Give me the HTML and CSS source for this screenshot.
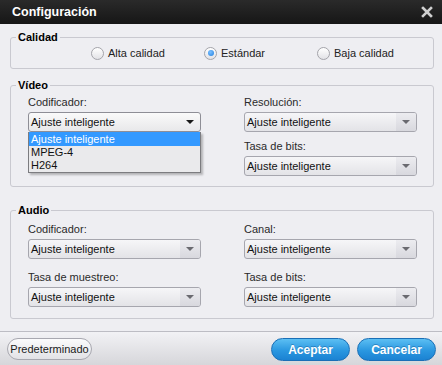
FILE: index.html
```html
<!DOCTYPE html>
<html lang="es">
<head>
    <meta charset="UTF-8">
    <meta name="viewport" content="width=device-width, initial-scale=1.0">
    <title>Configuración</title>
    <link rel="stylesheet" href="styles.css">
</head>
<body>
    <div class="window">
        <div class="titlebar">
            <span class="title">Configuración</span>
            <svg class="close" width="12" height="12" viewBox="0 0 12 12">
                <path d="M2 2 L10 10 M10 2 L2 10" stroke="#cfcfcf" stroke-width="2.6" stroke-linecap="square"/>
            </svg>
        </div>

        <div class="main">
            <fieldset class="group quality">
                <legend>Calidad</legend>
                <div class="radios">
                    <label class="radio"><span class="dot"></span>Alta calidad</label>
                    <label class="radio checked"><span class="dot"></span>Estándar</label>
                    <label class="radio"><span class="dot"></span>Baja calidad</label>
                </div>
            </fieldset>

            <fieldset class="group video">
                <legend>Vídeo</legend>
                <div class="fields">
                    <div class="field">
                        <div class="label">Codificador:</div>
                        <div class="combo active"><span class="value">Ajuste inteligente</span><span class="arrow"></span></div>
                        <ul class="dropdown">
                            <li class="selected">Ajuste inteligente</li>
                            <li>MPEG-4</li>
                            <li>H264</li>
                        </ul>
                    </div>
                    <div class="field">
                        <div class="label">Resolución:</div>
                        <div class="combo"><span class="value">Ajuste inteligente</span><span class="arrow"></span></div>
                    </div>
                    <!-- celda tapada por la lista desplegable -->
                    <div class="field empty"></div>
                    <div class="field">
                        <div class="label">Tasa de bits:</div>
                        <div class="combo"><span class="value">Ajuste inteligente</span><span class="arrow"></span></div>
                    </div>
                </div>
            </fieldset>

            <fieldset class="group audio">
                <legend>Audio</legend>
                <div class="fields">
                    <div class="field">
                        <div class="label">Codificador:</div>
                        <div class="combo"><span class="value">Ajuste inteligente</span><span class="arrow"></span></div>
                    </div>
                    <div class="field">
                        <div class="label">Canal:</div>
                        <div class="combo"><span class="value">Ajuste inteligente</span><span class="arrow"></span></div>
                    </div>
                    <div class="field">
                        <div class="label">Tasa de muestreo:</div>
                        <div class="combo"><span class="value">Ajuste inteligente</span><span class="arrow"></span></div>
                    </div>
                    <div class="field">
                        <div class="label">Tasa de bits:</div>
                        <div class="combo"><span class="value">Ajuste inteligente</span><span class="arrow"></span></div>
                    </div>
                </div>
            </fieldset>
        </div>

        <div class="footer">
            <button class="btn default">Predeterminado</button>
            <div class="actions">
                <button class="btn primary">Aceptar</button>
                <button class="btn primary">Cancelar</button>
            </div>
        </div>
    </div>
</body>
</html>
```

FILE: styles.css
```css
body {
    margin: 0;
    font-family: "Liberation Sans", Arial, sans-serif;
    font-size: 11px;
    color: #1a1a1a;
    background: #eeeef2;
}
.window {
    width: 442px;
    height: 365px;
    display: flex;
    flex-direction: column;
    overflow: hidden;
}
.titlebar {
    height: 24px;
    flex: none;
    display: flex;
    align-items: center;
    justify-content: space-between;
    padding: 0 9px 0 12px;
    background: linear-gradient(#2a2a2a, #161616);
}
.title {
    color: #fff;
    font-weight: bold;
    font-size: 12.5px;
}
.main {
    flex: 1;
}
.group {
    margin: 0 8px 0 10px;
    padding: 0;
    min-inline-size: 0;
    border: 1px solid #c9c9d0;
    border-radius: 3px;
}
.group legend {
    margin-left: 5px;
    padding: 0 2px;
    font-weight: bold;
    line-height: 14px;
    color: #000;
}
.quality {
    margin-top: 6px;
}
.video {
    margin-top: 9px;
}
.audio {
    margin-top: 16px;
}
.radios {
    display: flex;
    padding: 2px 0 8px 80px;
}
.radio {
    width: 113px;
    height: 14px;
    display: flex;
    align-items: center;
    gap: 4px;
    color: #222;
}
.dot {
    width: 11px;
    height: 11px;
    border: 1px solid #a4a4aa;
    border-radius: 50%;
    background: linear-gradient(#ffffff, #e2e2e6);
    display: flex;
    align-items: center;
    justify-content: center;
}
.radio.checked .dot::after {
    content: "";
    width: 6px;
    height: 6px;
    border-radius: 50%;
    background: radial-gradient(circle at 40% 35%, #7cc0ff, #1f7fe0);
}
.fields {
    display: grid;
    grid-template-columns: 173px 173px;
    column-gap: 43px;
    padding-left: 17px;
}
.video .fields {
    padding-top: 3px;
    padding-bottom: 10px;
    row-gap: 7px;
}
.audio .fields {
    padding-top: 5px;
    padding-bottom: 11px;
    row-gap: 11px;
}
.field {
    position: relative;
}
.label {
    line-height: 14px;
    margin-bottom: 3px;
    color: #2a2a2a;
}
.combo {
    height: 20px;
    box-sizing: border-box;
    display: flex;
    border: 1px solid #a6a6ae;
    border-radius: 3px;
    background: linear-gradient(#f6f6f8, #e3e3e7);
    overflow: hidden;
}
.combo .value {
    flex: 1;
    padding-left: 2px;
    line-height: 18px;
    color: #111;
}
.combo .arrow {
    width: 20px;
    display: flex;
    align-items: center;
    justify-content: center;
    background: linear-gradient(#ececf0, #d8d8de);
}
.combo .arrow::after {
    content: "";
    border-left: 4px solid transparent;
    border-right: 4px solid transparent;
    border-top: 4px solid #6a6a70;
}
.combo.active {
    border-color: #8e8e96;
    background: linear-gradient(#fafafa, #e8e8ea);
}
.combo.active .arrow {
    background: none;
}
.combo.active .arrow::after {
    border-top-color: #1a1a1a;
}
.dropdown {
    position: absolute;
    top: 100%;
    left: 0;
    width: 173px;
    box-sizing: border-box;
    margin: 0;
    padding: 0;
    list-style: none;
    border: 1px solid #7c7c80;
    border-top: none;
    background: #eaeaec;
    box-shadow: 2px 2px 2px rgba(0,0,0,0.25);
    z-index: 5;
}
.dropdown li {
    line-height: 13px;
    padding-left: 2px;
    color: #111;
}
.dropdown li.selected {
    line-height: 14px;
    background: #3399ff;
    color: #fff;
}
.footer {
    flex: none;
    display: flex;
    justify-content: space-between;
    align-items: flex-start;
    padding: 6px 6px 0 6px;
    box-sizing: border-box;
    height: 34px;
    border-top: 1px solid #bdbdc4;
    background: linear-gradient(#f2f2f5, #d6d6da);
}
.actions {
    display: flex;
    gap: 7px;
}
.btn {
    font-family: "Liberation Sans", Arial, sans-serif;
    cursor: pointer;
    padding: 0;
}
.btn.default {
    width: 85px;
    height: 22px;
    margin-left: 1px;
    border: 1px solid #a8a8b0;
    border-radius: 11px;
    background: linear-gradient(#fbfbfc, #e2e2e6);
    font-size: 11px;
    color: #1a1a1a;
}
.btn.primary {
    width: 79px;
    height: 23px;
    border: 1px solid #1a6fb6;
    border-radius: 12px;
    background: linear-gradient(#5cbff3, #2a97e0 55%, #1b82d2);
    color: #fff;
    font-weight: bold;
    font-size: 12px;
    text-shadow: 0 -1px 0 rgba(0,60,120,0.35);
}
```
